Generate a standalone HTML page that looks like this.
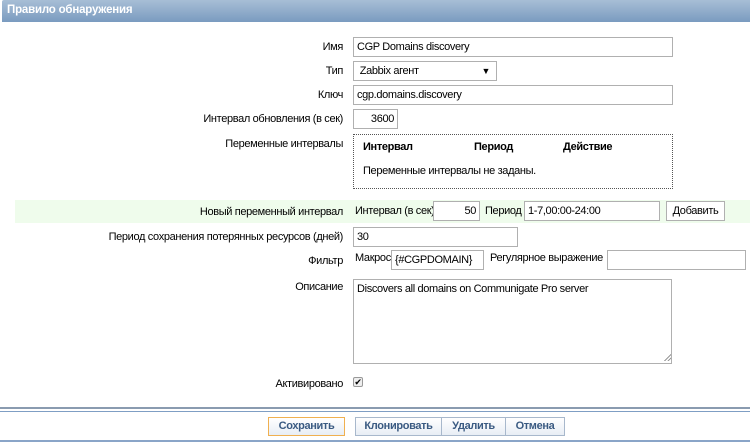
<!DOCTYPE html>
<html><head><meta charset="utf-8"><style>
*{box-sizing:border-box;margin:0;padding:0}
body{width:750px;height:443px;background:#fff;font-family:"Liberation Sans","DejaVu Sans",sans-serif;font-size:11px;letter-spacing:-0.35px;color:#000;position:relative;overflow:hidden}
.a{position:absolute;white-space:nowrap}
.hdr{left:2px;top:0;width:748px;height:22px;background:linear-gradient(#a7bed6,#7a9bc0);color:#fff;font-weight:bold;font-size:11.5px;letter-spacing:-0.2px;padding:4px 0 0 5px;border-radius:2px 0 0 0}
.l{right:407px;text-align:right}
.in{border:1px solid #b0b0b0;background:#fff;padding:3px 3px;height:20px;line-height:12px}
.btn{border:1px solid #a8b8cc;background:linear-gradient(#fff,#e8eef5);color:#3a5a82;font-weight:bold;text-align:center;height:19px;line-height:17px;font-size:11px}
</style></head><body>
<div class="a hdr">Правило обнаружения</div>

<div class="a l" style="top:41px">Имя</div>
<div class="a in" style="left:353px;top:37px;width:320px">CGP Domains discovery</div>
<div class="a l" style="top:65px">Тип</div>
<div class="a in" style="left:353px;top:61px;width:144px">&nbsp;Zabbix агент<span style="position:absolute;right:6px;top:3px;font-size:9px">▼</span></div>
<div class="a l" style="top:89px">Ключ</div>
<div class="a in" style="left:353px;top:85px;width:320px">cgp.domains.discovery</div>
<div class="a l" style="top:113px">Интервал обновления (в сек)</div>
<div class="a in" style="left:353px;top:109px;width:45px;text-align:right">3600</div>
<div class="a l" style="top:138px">Переменные интервалы</div>
<div class="a" style="left:353px;top:134px;width:320px;height:55px;border:1px dotted #555"></div>
<div class="a" style="left:363px;top:141px;font-weight:bold">Интервал</div>
<div class="a" style="left:474px;top:141px;font-weight:bold">Период</div>
<div class="a" style="left:563px;top:141px;font-weight:bold">Действие</div>
<div class="a" style="left:363px;top:165px">Переменные интервалы не заданы.</div>

<div class="a" style="left:15px;top:200px;width:735px;height:23px;background:#effcec"></div>
<div class="a l" style="top:206px">Новый переменный интервал</div>
<div class="a" style="left:355px;top:205px">Интервал (в сек)</div>
<div class="a in" style="left:433px;top:201px;width:47px;text-align:right">50</div>
<div class="a" style="left:485px;top:205px">Период</div>
<div class="a in" style="left:524px;top:201px;width:136px">1-7,00:00-24:00</div>
<div class="a in" style="left:666px;top:201px;width:59px;text-align:center">Добавить</div>

<div class="a l" style="top:231px">Период сохранения потерянных ресурсов (дней)</div>
<div class="a in" style="left:353px;top:227px;width:165px">30</div>
<div class="a l" style="top:255px">Фильтр</div>
<div class="a" style="left:355px;top:252px">Макрос</div>
<div class="a in" style="left:391px;top:250px;width:93px">{#CGPDOMAIN}</div>
<div class="a" style="left:490px;top:252px">Регулярное выражение</div>
<div class="a in" style="left:607px;top:250px;width:139px"></div>
<div class="a l" style="top:281px">Описание</div>
<div class="a in" style="left:353px;top:279px;width:319px;height:85px">Discovers all domains on Communigate Pro server</div>
<div class="a" style="left:664px;top:354px;width:7px;height:7px;background:linear-gradient(135deg,transparent 50%,#999 50%,#999 58%,transparent 58%,transparent 75%,#999 75%,#999 83%,transparent 83%)"></div>
<div class="a l" style="top:378px">Активировано</div>
<div class="a" style="left:353px;top:377px;width:10px;height:10px;border:1px solid #999;border-radius:2px;background:#eee;font-size:9px;line-height:8px;text-align:center">✔</div>

<div class="a" style="left:0;top:407px;width:750px;height:2px;background:#8a9bb0"></div>
<div class="a" style="left:0;top:411px;width:750px;height:1px;background:#7f9ec4"></div>
<div class="a btn" style="left:268px;top:417px;width:77px;border-color:#f0b050">Сохранить</div>
<div class="a btn" style="left:355px;top:417px;width:87px">Клонировать</div>
<div class="a btn" style="left:441px;top:417px;width:65px">Удалить</div>
<div class="a btn" style="left:505px;top:417px;width:60px">Отмена</div>
<div class="a" style="left:0;top:440px;width:750px;height:2px;background:#8aa5c8"></div>
</body></html>
